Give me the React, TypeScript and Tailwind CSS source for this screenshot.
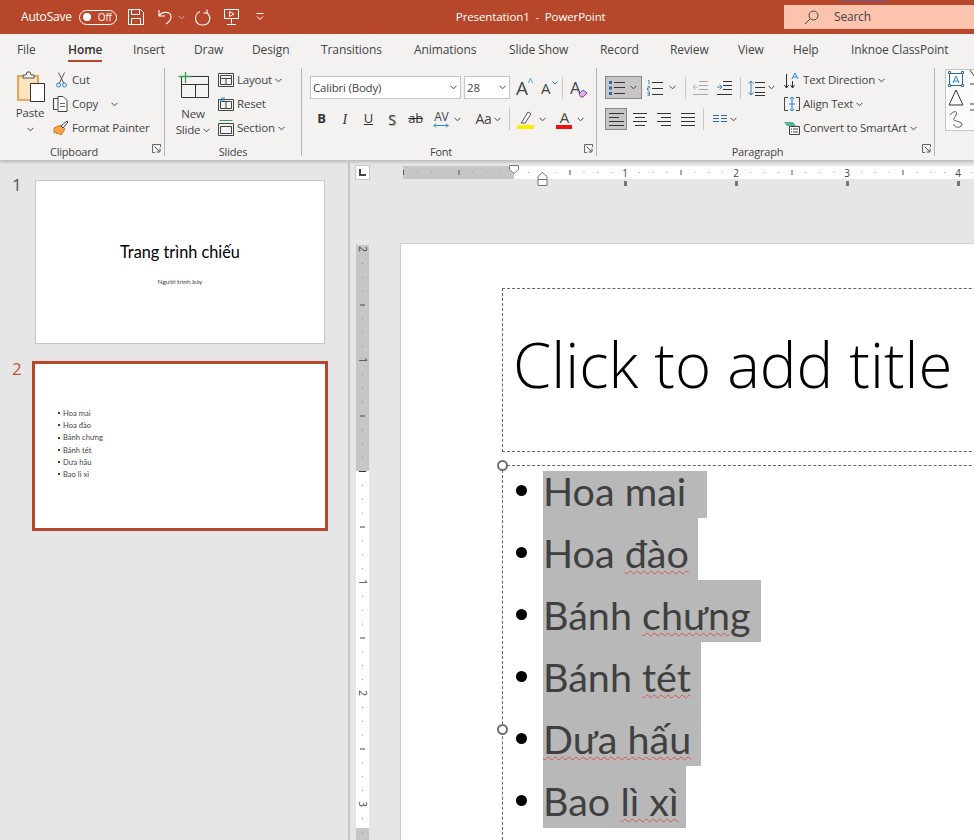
import type { ReactNode } from "react";

const tabs = [
  ["File", "ml-[17px] w-[51px]"],
  ["Home", "w-[65px]"],
  ["Insert", "w-[61px]"],
  ["Draw", "w-[58px]"],
  ["Design", "w-[69px]"],
  ["Transitions", "w-[93px]"],
  ["Animations", "w-[95px]"],
  ["Slide Show", "w-[91px]"],
  ["Record", "w-[70px]"],
  ["Review", "w-[68px]"],
  ["View", "w-[55px]"],
  ["Help", "w-[58px]"],
  ["Inknoe ClassPoint", "w-[110px]"],
];

const bodyLines = [
  { text: "Hoa mai", row: "h-[47px]", hl: "w-[164px]" },
  { text: "Hoa", wavy: "đào", row: "h-[62px]", hl: "w-[155px]" },
  { text: "Bánh", wavy: "chưng", row: "h-[62px]", hl: "w-[218px]" },
  { text: "Bánh", wavy: "tét", row: "h-[62px]", hl: "w-[158px]" },
  { text: "", wavy: "Dưa hấu", row: "h-[62px]", hl: "w-[158px]" },
  { text: "Bao", wavy: "lì xì", row: "h-[62px]", hl: "w-[143px]" },
];

const thumbLines = ["Hoa mai", "Hoa đào", "Bánh chưng", "Bánh tét", "Dưa hấu", "Bao lì xì"];

function Chevron({ className = "" }: { className?: string }) {
  return (
    <svg width="7" height="5" viewBox="0 0 7 5" className={`shrink-0 ${className}`}>
      <path d="M.5 .8 3.5 3.8 6.5 .8" fill="none" stroke="#444" strokeWidth="1" />
    </svg>
  );
}

function Icon({ w, h, children, className = "" }: { w: number; h: number; children: ReactNode; className?: string }) {
  return (
    <svg width={w} height={h} viewBox={`0 0 ${w} ${h}`} fill="none" className={`shrink-0 ${className}`}>
      {children}
    </svg>
  );
}

function Lines({ x, w, ys, color = "#333" }: { x: number; w: number; ys: number[]; color?: string }) {
  return (
    <>
      {ys.map((y) => (
        <path key={y} d={`M${x} ${y + 0.5}h${w}`} stroke={color} />
      ))}
    </>
  );
}

function Launcher() {
  return (
    <svg width="9" height="9" viewBox="0 0 9 9" fill="none" className="absolute right-[3px] bottom-[3px]">
      <path d="M8.5 3V.5H.5v8H3" stroke="#666" />
      <path d="M2.5 2.5 7.5 7.5M4.5 8H8V4.5" stroke="#555" />
    </svg>
  );
}

function Group({ label, className, children, launcher }: { label: string; className: string; children: ReactNode; launcher?: boolean }) {
  return (
    <div className={`relative flex h-[88px] shrink-0 flex-col border-r border-[#b5b5b5] ${className}`}>
      <div className="h-[78px] shrink-0">{children}</div>
      <div className={`h-[12px] shrink-0 text-center text-[11px] leading-[12px] text-[#444] ${launcher ? "pr-[16px]" : ""}`}>{label}</div>
      {launcher && <Launcher />}
    </div>
  );
}

function SmallRow({ icon, label, chevron }: { icon: ReactNode; label: string; chevron?: string }) {
  return (
    <div className="flex h-[24px] items-center">
      <span className="flex w-[16px] justify-center">{icon}</span>
      <span className="ml-[3px] whitespace-nowrap">{label}</span>
      {chevron && <Chevron className={chevron} />}
    </div>
  );
}

function Clipboard() {
  return (
    <div className="flex h-[78px]">
      <div className="ml-[11px] flex w-[38px] flex-col items-center pt-[2px]">
        <Icon w={28} h={33} className="ml-[2px]">
          <path d="M1 6h20v24H1z" fill="#fbe3c0" stroke="#e8912d" strokeWidth="1.6" />
          <path d="M6 5h3l1-3h3l1 3h3v3H6z" fill="#f3f2f1" stroke="#555" />
          <path d="M13.5 13.5h14v18h-14z" fill="#fff" stroke="#333" />
        </Icon>
        <span className="mt-[1px] leading-[18px]">Paste</span>
        <Chevron className="mt-[5px]" />
      </div>
      <div className="ml-[4px]">
        <SmallRow
          label="Cut"
          icon={
            <Icon w={11} h={16}>
              <path d="M3 12 8.5 .5M8 12 2.5 .5" stroke="#555" />
              <circle cx="2.5" cy="13" r="2" stroke="#2b88d8" />
              <circle cx="8.5" cy="13" r="2" stroke="#2b88d8" />
            </Icon>
          }
        />
        <SmallRow
          label="Copy"
          chevron="ml-[13px]"
          icon={
            <Icon w={16} h={16}>
              <path d="M5 2.5H.5v11H4" stroke="#444" />
              <path d="M5 .5h5l4 4v11H5z" fill="#fff" stroke="#444" />
              <path d="M7 7.5h5M7 10.5h5" stroke="#666" />
            </Icon>
          }
        />
        <SmallRow
          label="Format Painter"
          icon={
            <Icon w={16} h={16}>
              <path d="M1 8l7-3 4 4-4 6-3-2-1 1-1-2-2 1z" fill="#f5a44a" stroke="#d9781a" />
              <path d="M8 6l6-5 1 1-5 6z" fill="#fff" stroke="#444" />
            </Icon>
          }
        />
      </div>
    </div>
  );
}

function Slides() {
  return (
    <div className="flex h-[78px]">
      <div className="ml-[9px] flex w-[38px] flex-col items-center pt-[4px] leading-[16px]">
        <Icon w={31} h={26}>
          <path d="M3.5 4.5h27v21h-27zM3.5 12.5h27M17.5 12.5v13" stroke="#333" />
          <path d="M.5 4.5h13M7.5 0v11" stroke="#3f9c5a" strokeWidth="1.3" />
        </Icon>
        <span className="mt-[8px]">New</span>
        <span className="flex items-center whitespace-nowrap">
          Slide
          <Chevron className="ml-[3px]" />
        </span>
      </div>
      <div className="ml-[6px]">
        <SmallRow
          label="Layout"
          chevron="ml-[3px]"
          icon={
            <Icon w={16} h={14}>
              <path d="M.5 .5h15v13H.5zM2.5 2.5h11v9h-11zM2.5 5.5h11M8 5.5v6" stroke="#444" />
            </Icon>
          }
        />
        <SmallRow
          label="Reset"
          icon={
            <Icon w={16} h={14}>
              <path d="M.5 2.5h15v11H.5zM2.5 4.5h11v7h-11zM8 4.5v7" stroke="#444" />
              <path d="M7 1H4L2 3l2 2M2 3h5" stroke="#2b88d8" />
            </Icon>
          }
        />
        <SmallRow
          label="Section"
          chevron="ml-[3px]"
          icon={
            <Icon w={16} h={16}>
              <path d="M.5 .5h13" stroke="#3f9c5a" transform="translate(1 0)" />
              <path d="M.5 3.5h15v12H.5zM2.5 6.5h11v7h-11z" stroke="#444" />
            </Icon>
          }
        />
      </div>
    </div>
  );
}

function Combo({ value, className }: { value: string; className: string }) {
  return (
    <div className={`flex h-[23px] items-center justify-between border border-[#c8c6c4] bg-white pl-[2px] pr-[3px] ${className}`}>
      <span className="whitespace-nowrap">{value}</span>
      <Chevron />
    </div>
  );
}

function Sep({ className = "" }: { className?: string }) {
  return <span className={`h-[22px] w-px shrink-0 bg-[#c8c6c4] ${className}`} />;
}

function FontTool({ children, className = "w-[23.6px]" }: { children: ReactNode; className?: string }) {
  return <span className={`flex h-[22px] shrink-0 items-center justify-center text-[14px] text-[#333] ${className}`}>{children}</span>;
}

function Font() {
  return (
    <div className="pl-[8px] pt-[8px]">
      <div className="flex items-center">
        <Combo value="Calibri (Body)" className="w-[151px]" />
        <Combo value="28" className="ml-[3px] w-[46px]" />
        <span className="relative ml-[6px] w-[16px] text-[19px] leading-[22px] text-[#444]">
          A<span className="absolute right-[-1px] top-[-1px] text-[10px] leading-[12px] text-[#2b88d8]">^</span>
        </span>
        <span className="relative ml-[9px] w-[15px] text-[15px] leading-[22px] text-[#444]">
          A
          <svg width="6" height="4" viewBox="0 0 6 4" fill="none" className="absolute right-[-2px] top-[4px]">
            <path d="M.5 .5 3 3 5.5 .5" stroke="#2b88d8" />
          </svg>
        </span>
        <Sep className="ml-[6px]" />
        <span className="relative ml-[7px] w-[17px] text-[17px] leading-[22px] text-[#444]">
          A
          <svg width="10" height="9" viewBox="0 0 10 9" className="absolute bottom-[1px] right-[-1px]">
            <path d="M1 5 5 1l4 3-4 4H3z" fill="#d9b3e6" stroke="#8a3fa8" />
          </svg>
        </span>
      </div>
      <div className="mt-[9px] flex items-center">
        <FontTool className="w-[23px]"><b className="text-[13px]">B</b></FontTool>
        <FontTool><i className="font-['Liberation_Serif'] text-[14px]">I</i></FontTool>
        <FontTool><span className="text-[13px] underline">U</span></FontTool>
        <FontTool><span className="text-[14px] [text-shadow:1px_1px_1px_#aaa]">S</span></FontTool>
        <FontTool><span className="text-[13px] line-through">ab</span></FontTool>
        <span className="ml-[3px] flex w-[22px] shrink-0 flex-col items-center text-[12px] leading-[12px] text-[#444]">
          AV
          <svg width="16" height="5" viewBox="0 0 16 5" fill="none">
            <path d="M.5 2.5h15M3 .5 1 2.5l2 2M13 .5l2 2-2 2" stroke="#2b88d8" />
          </svg>
        </span>
        <Chevron className="ml-[2px]" />
        <span className="ml-[14px] w-[18px] text-[14px] leading-[22px] text-[#444]">Aa</span>
        <Chevron className="ml-[1px]" />
        <Sep className="ml-[8px]" />
        <Icon w={17} h={20} className="ml-[7px]">
          <path d="M5 13 11 3l3 2-6 9H4z" fill="#fff" stroke="#555" />
          <path d="M0 16h17v4H0z" fill="#ffee00" />
        </Icon>
        <Chevron className="ml-[5px]" />
        <span className="ml-[10px] flex w-[16px] flex-col items-center text-[15px] leading-[15px] text-[#444]">
          A
          <span className="h-[4px] w-[16px] bg-[#ee1111]" />
        </span>
        <Chevron className="ml-[5px]" />
      </div>
    </div>
  );
}

function Bullets() {
  return (
    <Icon w={16} h={16}>
      <path d="M0 1h3v3H0zM0 6.5h3v3H0zM0 12h3v3H0z" fill="#2b6cb0" />
      <Lines x={5} w={11} ys={[2, 7, 13]} />
    </Icon>
  );
}

function Paragraph() {
  return (
    <div className="flex h-[78px]">
      <div className="ml-[8px] w-[180px] pt-[8px]">
        <div className="flex h-[23px] items-center">
          <span className="flex h-[23px] w-[37px] items-center border border-[#8a8886] bg-[#c8c6c4] pl-[3px]">
            <Bullets />
            <Chevron className="ml-[5px]" />
          </span>
          <Icon w={16} h={16} className="ml-[5px]">
            <path d="M1 .5h1v4M.5 6.5h2v1.5h-2v2h2M.5 12h2v3.5h-2M.5 13.7h2" stroke="#2b6cb0" strokeWidth=".8" />
            <Lines x={5} w={11} ys={[2, 8, 14]} />
          </Icon>
          <Chevron className="ml-[6px]" />
          <Sep className="ml-[9px]" />
          <Icon w={15} h={14} className="ml-[7px]">
            <Lines x={6} w={9} ys={[0, 4, 8]} color="#a6a6a6" />
            <path d="M0 13.5h15" stroke="#a6a6a6" />
            <path d="M5 6H0M2.5 3.5 0 6l2.5 2.5" stroke="#9fbfdf" />
          </Icon>
          <Icon w={15} h={14} className="ml-[9px]">
            <Lines x={6} w={9} ys={[0, 4, 8]} />
            <path d="M0 13.5h15" stroke="#333" />
            <path d="M0 6h5M2.5 3.5 5 6 2.5 8.5" stroke="#2b88d8" />
          </Icon>
          <Sep className="ml-[8px]" />
          <Icon w={17} h={16} className="ml-[7px]">
            <path d="M3 1v14M.5 3.5 3 1l2.5 2.5M.5 12.5 3 15l2.5-2.5" stroke="#2b88d8" />
            <Lines x={7} w={10} ys={[2, 7, 12, 15]} />
          </Icon>
          <Chevron className="ml-[3px]" />
        </div>
        <div className="mt-[9px] flex h-[22px] items-center">
          <span className="flex h-[22px] w-[22px] items-center justify-center border border-[#8a8886] bg-[#c8c6c4]">
            <Icon w={15} h={14}><Lines x={0} w={15} ys={[1, 9, 13]} /><Lines x={0} w={10} ys={[5]} /></Icon>
          </span>
          <Icon w={14} h={14} className="ml-[6px]"><Lines x={0} w={14} ys={[1, 9]} /><Lines x={2} w={10} ys={[5, 13]} /></Icon>
          <Icon w={14} h={14} className="ml-[10px]"><Lines x={0} w={14} ys={[1, 9]} /><Lines x={4} w={10} ys={[5, 13]} /></Icon>
          <Icon w={14} h={14} className="ml-[10px]"><Lines x={0} w={14} ys={[1, 5, 9, 13]} /></Icon>
          <Sep className="ml-[8px]" />
          <Icon w={14} h={8} className="ml-[9px]">
            <path d="M0 .5h6M8 .5h6M0 3.5h6M8 3.5h6M0 6.5h6M8 6.5h6" stroke="#2b6cb0" />
          </Icon>
          <Chevron className="ml-[3px]" />
        </div>
      </div>
      <div className="ml-[-1px]">
        <SmallRow
          label="Text Direction"
          chevron="ml-[3px]"
          icon={
            <Icon w={16} h={17}>
              <path d="M2.5 2v14M.5 13l2 3 2-3M8.5 9v7M6.5 13l2 3 2-3" stroke="#333" />
              <path d="M8 7l3-6 3 6M9 5h4" stroke="#2b88d8" />
            </Icon>
          }
        />
        <SmallRow
          label="Align Text"
          chevron="ml-[3px]"
          icon={
            <Icon w={16} h={16}>
              <path d="M4 1.5H.5v13H4M12 1.5h3.5v13H12" stroke="#444" />
              <path d="M8 1v14M6 3l2-2 2 2M6 13l2 2 2-2M5 8h6" stroke="#2b88d8" />
            </Icon>
          }
        />
        <SmallRow
          label="Convert to SmartArt"
          chevron="ml-[3px]"
          icon={
            <Icon w={16} h={14}>
              <path d="M0 1h9l3 4H3z" fill="#4fb58c" />
              <path d="M5.5 5.5h10v8h-10zM7 8h1M9 8h5M7 11h1M9 11h5" fill="#fff" stroke="#444" />
            </Icon>
          }
        />
      </div>
    </div>
  );
}

function Shapes() {
  return (
    <div className="ml-[10px] mt-[1px] h-[62px] w-[40px] overflow-hidden border border-r-0 border-[#c8c6c4] bg-[#fbfbfb]">
      <Icon w={30} h={60}>
        <path d="M3.5 3.5h13v12h-13z" stroke="#2b6cb0" />
        <path d="M7 13l3-7 3 7M8 11h4" stroke="#2b88d8" />
        <path d="M2.5 1.5h2v2h-2zM15.5 1.5h2v2h-2zM2.5 14.5h2v2h-2zM15.5 14.5h2v2h-2z" fill="#fff" stroke="#2b6cb0" />
        <path d="M24 0l5 7M24 14h6" stroke="#444" />
        <path d="M10 20 3 35h14z" stroke="#333" />
        <path d="M24 34h6M24 40h6" stroke="#444" />
        <path d="M4 45c4-5 8-4 6 0s-4 5 0 6 8 2 5 5-8 0-7-2" stroke="#555" />
      </Icon>
    </div>
  );
}

function TitleBar() {
  return (
    <div className="relative flex h-[34px] items-center bg-[#b7472a] text-white">
      <span className="ml-[21px] text-[12px]">AutoSave</span>
      <span className="ml-[7px] flex h-[15px] w-[38px] items-center rounded-full border border-white pl-[3px] text-[10px]">
        <span className="h-[8px] w-[8px] rounded-full bg-white" />
        <span className="ml-[7px] leading-none">Off</span>
      </span>
      <Icon w={16} h={16} className="ml-[11px]">
        <path d="M.5 .5h12l3 3v12H.5zM3.5 .5v5h8v-5M3.5 15.5v-6h9v6" stroke="#fff" />
      </Icon>
      <Icon w={16} h={16} className="ml-[13px]">
        <path d="M2 1v6h6M2 7c3-5 12-5 12 1 0 3-2 5-5 7" stroke="#fff" strokeWidth="1.1" />
      </Icon>
      <Chevron className="ml-[5px] invert" />
      <Icon w={17} h={17} className="ml-[9px]">
        <path d="M6 2.5C0 4.5-.5 16 8.5 16c8 0 9.500-9 4-12.500M13 .5V4H9.500" stroke="#fff" strokeWidth="1.1" />
      </Icon>
      <Icon w={15} h={16} className="ml-[13px]">
        <path d="M.5 .5h14v9H.5zM7.5 9.5v5M3 15.5h9" stroke="#fff" />
        <path d="M5.5 2.5 10 5 5.5 7.5z" stroke="#fff" />
      </Icon>
      <Icon w={8} h={8} className="ml-[17px]">
        <path d="M.5 .5h7M1 3.5 4 6.5 7 3.5" stroke="#fff" />
      </Icon>
      <span className="ml-[192px] whitespace-nowrap tracking-[-0.1px]">Presentation1&nbsp; -&nbsp; PowerPoint</span>
      <div className="ml-auto flex h-[24px] w-[190px] items-center bg-[#fcc4ae] text-[12px] text-[#444]">
        <Icon w={15} h={15} className="ml-[20px]">
          <circle cx="9.5" cy="5.5" r="4.5" stroke="#444" />
          <path d="M6 9 1 14" stroke="#444" />
        </Icon>
        <span className="ml-[15px]">Search</span>
      </div>
      <span className="absolute left-[840px] top-0 h-px w-[48px] bg-[#6b5b95]" />
    </div>
  );
}

function Tabs() {
  return (
    <div className="flex h-[28px] items-start bg-[#f3f2f1] pt-[7px] text-[12px] leading-[18px] tracking-[-0.1px] text-[#444]">
      {tabs.map(([name, width]) => (
        <span key={name} className={`shrink-0 whitespace-nowrap ${width}`}>
          {name === "Home" ? (
            <span className="inline-block border-b-[2px] border-[#b7472a] pb-[1px] font-semibold text-[#333]">Home</span>
          ) : (
            name
          )}
        </span>
      ))}
    </div>
  );
}

function HorizontalRuler() {
  const ticks = Array.from({ length: 48 }, (_, i) => i - 8);
  return (
    <svg width="571" height="22" viewBox="0 0 571 22" className="ml-[33px] mt-[1px] shrink-0 overflow-visible">
      <rect x="0" y="0" width="111" height="13" fill="#c6c6c6" />
      <rect x="111" y="0" width="460" height="13" fill="#fff" />
      {ticks.map((i) => {
        const x = 111 + i * 13.875;
        if (i === 0) return null;
        if (i % 8 === 0 && i > 0) {
          return (
            <g key={i}>
              <text x={x} y="11" textAnchor="middle" fontSize="10" fill="#444" fontFamily="Open Sans, sans-serif">
                {i / 8}
              </text>
              <rect x={x - 1} y="15" width="3" height="5" fill="#777" />
            </g>
          );
        }
        if (i % 4 === 0) return <rect key={i} x={x} y="4" width="1" height="5" fill="#555" />;
        return <rect key={i} x={x} y="6" width="1" height="1" fill="#999" />;
      })}
      <path d="M106.5 -.5h9v4l-4.5 4-4.5-4z" fill="#fff" stroke="#777" />
      <path d="M135 10.5l4.5-4 4.5 4v9h-9zM135 13.5h9" fill="#fff" stroke="#777" />
    </svg>
  );
}

function VerticalRuler() {
  const ticks = Array.from({ length: 43 }, (_, i) => i - 16);
  return (
    <svg width="13" height="595" viewBox="0 0 13 595" className="ml-[6px] mt-[2px] shrink-0">
      <rect width="13" height="226" fill="#c6c6c6" />
      <rect y="226" width="13" height="357" fill="#fff" />
      <rect y="583" width="13" height="12" fill="#c6c6c6" />
      {ticks.map((i) => {
        const y = 226 + i * 13.875;
        if (i === 0) return <rect key={i} x="3" y={y} width="7" height="1" fill="#333" />;
        if (i % 8 === 0) {
          return (
            <text key={i} transform={`translate(3 ${y}) rotate(90)`} textAnchor="middle" fontSize="10" fill="#444" fontFamily="Open Sans, sans-serif">
              {Math.abs(i) / 8}
            </text>
          );
        }
        if (i % 4 === 0) return <rect key={i} x="4" y={y} width="5" height="1" fill="#444" />;
        return <rect key={i} x="6" y={y} width="1" height="1" fill="#888" />;
      })}
    </svg>
  );
}

function Handle({ className }: { className: string }) {
  return <span className={`absolute left-[-6px] h-[11px] w-[11px] rounded-full border-2 border-[#6e6e6e] bg-white ${className}`} />;
}

function Thumbnails() {
  return (
    <div className="w-[348px] shrink-0 pt-[20px]">
      <div className="flex">
        <span className="ml-[12px] mt-[-3px] h-[16px] w-[23px] text-[17px] leading-[16px] text-[#555]">1</span>
        <div className="flex h-[164px] w-[290px] flex-col items-center border border-[#c6c6c6] bg-white font-['Lato',sans-serif] tracking-normal">
          <span className="mt-[59px] text-[16.3px] leading-[24px] text-black">Trang trình chiếu</span>
          <span className="mt-[13px] text-[6.5px] leading-[10px] text-[#444]">Người trình bày</span>
        </div>
      </div>
      <div className="mt-[17px] flex">
        <span className="ml-[12px] h-[16px] w-[20px] text-[17px] leading-[16px] text-[#c8553d]">2</span>
        <div className="h-[170px] w-[296px] border-[3px] border-[#b7472a] bg-white pl-[23px] pt-[43px] font-['Lato',sans-serif] text-[7.6px] leading-[12.2px] tracking-normal text-[#444]">
          {thumbLines.map((line) => (
            <div key={line} className="flex items-center">
              <span className="h-[2px] w-[2px] rounded-full bg-black" />
              <span className="ml-[3px]">{line}</span>
            </div>
          ))}
        </div>
      </div>
    </div>
  );
}

function Slide() {
  return (
    <div className="ml-[31px] w-[600px] shrink-0 border-l border-t border-[#cfcfcf] bg-white pl-[101px] pt-[44px] tracking-normal">
      <div className="flex h-[164px] w-[520px] items-center border-y border-l border-dashed border-[#666] pb-[10px] pl-[10px]">
        <span className="whitespace-nowrap text-[61.7px] font-light leading-none text-black">Click to add title</span>
      </div>
      <div className="relative mt-[13px] h-[400px] w-[520px] border-l border-t border-dashed border-[#666] pt-[5px] font-['Lato',sans-serif] text-[39.5px] text-[#404040]">
        <Handle className="top-[-6px]" />
        <Handle className="top-[258px]" />
        {bodyLines.map((line) => (
          <div key={`${line.text}${line.wavy}`} className={`flex items-end ${line.row}`}>
            <span className="mb-[22px] ml-[13px] h-[11px] w-[11px] shrink-0 rounded-full bg-black" />
            <span className={`ml-[16px] flex h-full items-end whitespace-pre bg-[#b8b8b8] pb-[1px] leading-[52px] ${line.hl}`}>
              <span>
                {line.text}
                {line.text && line.wavy ? " " : ""}
                {line.wavy && <span className="underline decoration-[#d9534f] decoration-wavy decoration-1 underline-offset-2">{line.wavy}</span>}
              </span>
            </span>
          </div>
        ))}
      </div>
    </div>
  );
}

export default function App() {
  return (
    <div className="h-[840px] w-[974px] overflow-hidden bg-[#e6e6e6] font-['Open_Sans',sans-serif] text-[11.5px] tracking-[-0.2px] text-[#444]">
      <TitleBar />
      <Tabs />
      <div className="flex h-[98px] bg-[#f3f2f1] pt-[6px] shadow-[0_2px_3px_rgba(0,0,0,0.2)]">
        <Group label="Clipboard" className="w-[165px]" launcher>
          <Clipboard />
        </Group>
        <Group label="Slides" className="w-[137px]">
          <Slides />
        </Group>
        <Group label="Font" className="w-[295px]" launcher>
          <Font />
        </Group>
        <Group label="Paragraph" className="w-[338px]" launcher>
          <Paragraph />
        </Group>
        <Shapes />
      </div>
      <div className="flex h-[680px]">
        <Thumbnails />
        <div className="min-w-0 flex-1 overflow-hidden border-l-2 border-[#c6c6c6]">
          <div className="flex h-[83px] pl-[5px] pt-[5px]">
            <span className="flex h-[15px] w-[15px] shrink-0 items-center justify-center border border-[#c6c6c6] bg-white">
              <svg width="7" height="7" viewBox="0 0 7 7">
                <path d="M1 0v6h6" fill="none" stroke="#444" strokeWidth="2" />
              </svg>
            </span>
            <HorizontalRuler />
          </div>
          <div className="flex">
            <VerticalRuler />
            <Slide />
          </div>
        </div>
      </div>
    </div>
  );
}
